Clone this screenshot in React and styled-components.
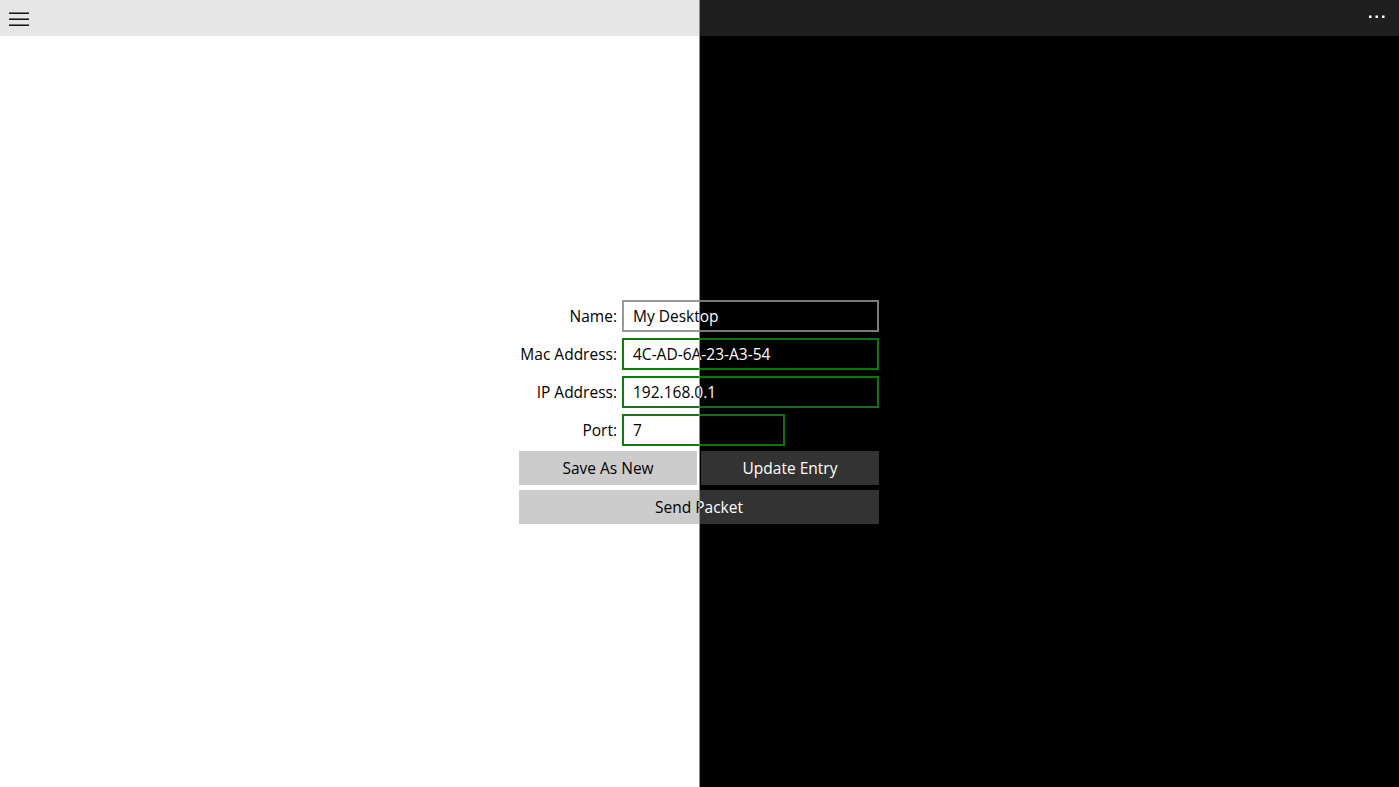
import React from "react"
import styled, { createGlobalStyle } from "styled-components"

const themes = {
    light: {
        bg: "#ffffff",
        bar: "#e6e6e6",
        text: "#000000",
        field: "#ffffff",
        plain: "#999999",
        valid: "#107c10",
        button: "#cccccc",
        icon: "#000000",
    },
    dark: {
        bg: "#000000",
        bar: "#1f1f1f",
        text: "#ffffff",
        field: "#000000",
        plain: "#7a7a7a",
        valid: "#0f730f",
        button: "#333333",
        icon: "#ffffff",
    },
}

const GlobalStyle = createGlobalStyle`
    html, body {
        margin: 0;
        padding: 0;
        overflow: hidden;
        background: #000;
    }
    * {
        box-sizing: border-box;
    }
`

export default function App() {
    return (
        <>
            <GlobalStyle />
            <Split>
                <Pane>
                    <WakeScreen t={themes.light} />
                </Pane>
                <Divider />
                <Pane>
                    <WakeScreen t={themes.dark} shift={-700} />
                </Pane>
            </Split>
        </>
    )
}

function WakeScreen({ t, shift = 0 }) {
    return (
        <Screen $t={t} $shift={shift}>
            <TopBar $t={t}>
                <MenuButton aria-label="menu">
                    <svg width="20" height="14" viewBox="0 0 20 14">
                        <rect x="0" y="0.5" width="20" height="1.4" fill={t.icon} />
                        <rect x="0" y="6.5" width="20" height="1.4" fill={t.icon} />
                        <rect x="0" y="12.5" width="20" height="1.4" fill={t.icon} />
                    </svg>
                </MenuButton>
                <MoreButton aria-label="more">
                    <svg width="16" height="4" viewBox="0 0 16 4">
                        <rect x="0" y="0.5" width="2.5" height="2.5" fill={t.icon} />
                        <rect x="6.5" y="0.5" width="2.5" height="2.5" fill={t.icon} />
                        <rect x="13" y="0.5" width="2.5" height="2.5" fill={t.icon} />
                    </svg>
                </MoreButton>
            </TopBar>
            <Body>
                <Form>
                    <Label $t={t}>Name:</Label>
                    <Field $t={t} readOnly defaultValue="My Desktop" />
                    <Label $t={t}>Mac Address:</Label>
                    <Field $t={t} $valid readOnly defaultValue="4C-AD-6A-23-A3-54" />
                    <Label $t={t}>IP Address:</Label>
                    <Field $t={t} $valid readOnly defaultValue="192.168.0.1" />
                    <Label $t={t}>Port:</Label>
                    <Field $t={t} $valid $narrow readOnly defaultValue="7" />
                    <Actions>
                        <Button $t={t}>Save As New</Button>
                        <Button $t={t}>Update Entry</Button>
                        <Button $t={t} $wide>Send Packet</Button>
                    </Actions>
                </Form>
            </Body>
        </Screen>
    )
}

const Split = styled.div`
    display: flex;
    width: 1399px;
    height: 787px;
`
const Pane = styled.div`
    flex: none;
    width: 699px;
    height: 787px;
    overflow: hidden;
`
const Divider = styled.div`
    flex: none;
    width: 1px;
    background: #8c8c8c;
`
const Screen = styled.div`
    width: 1399px;
    height: 787px;
    margin-left: ${p => p.$shift}px;
    display: flex;
    flex-direction: column;
    background: ${p => p.$t.bg};
    font-family: "Open Sans", "Noto Sans", sans-serif;
`
const TopBar = styled.div`
    height: 36px;
    flex: none;
    display: flex;
    align-items: center;
    justify-content: space-between;
    background: ${p => p.$t.bar};
`
const MenuButton = styled.div`
    display: flex;
    align-items: center;
    height: 36px;
    padding-left: 9px;
    padding-top: 1px;
`
const MoreButton = styled.div`
    display: flex;
    align-items: center;
    height: 36px;
    padding-right: 14px;
    padding-bottom: 2px;
`
const Body = styled.div`
    flex: 1;
    display: flex;
    align-items: center;
    justify-content: center;
    padding-right: 1px;
`
const Form = styled.div`
    width: 360px;
    display: grid;
    grid-template-columns: 1fr 257px;
    column-gap: 5px;
    row-gap: 6px;
    align-items: center;
`
const Label = styled.div`
    text-align: right;
    font-size: 15.5px;
    color: ${p => p.$t.text};
    white-space: nowrap;
`
const Field = styled.input`
    width: ${p => (p.$narrow ? "163px" : "257px")};
    height: 32px;
    margin: 0;
    padding: 0 9px;
    border: 2px solid ${p => (p.$valid ? p.$t.valid : p.$t.plain)};
    border-radius: 0;
    outline: none;
    background: ${p => p.$t.field};
    color: ${p => p.$t.text};
    font-family: "Open Sans", "Noto Sans", sans-serif;
    font-size: 15.5px;
`
const Actions = styled.div`
    grid-column: 1 / -1;
    display: grid;
    grid-template-columns: 1fr 1fr;
    column-gap: 4px;
    row-gap: 5px;
    margin-top: -1px;
`
const Button = styled.div`
    grid-column: ${p => (p.$wide ? "1 / -1" : "auto")};
    height: 34px;
    display: flex;
    align-items: center;
    justify-content: center;
    background: ${p => p.$t.button};
    color: ${p => p.$t.text};
    font-size: 15.5px;
`
